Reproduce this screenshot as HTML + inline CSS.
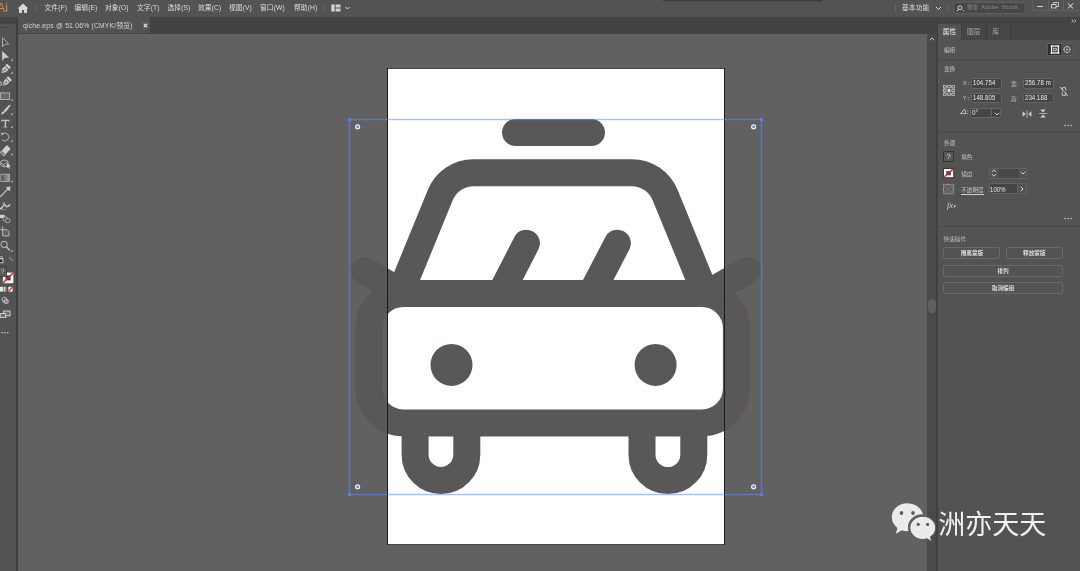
<!DOCTYPE html>
<html lang="zh-CN">
<head>
<meta charset="utf-8">
<title>qiche.eps @ 51.06% (CMYK/预览)</title>
<style>
*{box-sizing:border-box;margin:0;padding:0}
html,body{width:1080px;height:571px;overflow:hidden}
body{position:relative;background:#616161;font-family:"Liberation Sans","Noto Sans CJK SC",sans-serif;font-size:6.75px;color:#d4d4d4;line-height:1}
.a{position:absolute;white-space:nowrap}
svg{position:absolute;display:block;overflow:visible}
#menubar{left:0;top:0;width:1080px;height:17.5px;background:#535353;border-bottom:1px solid #424242}
#menubar .m{top:0;line-height:16px;color:#dedede;letter-spacing:0.08px}
#tabbar{left:17px;top:17px;width:920px;height:17px;background:#424242;border-bottom:1px solid #444444}
#doctab{left:1px;top:0;width:132px;height:16px;background:#535353;line-height:17.8px;color:#d6d6d6;padding-left:5px;letter-spacing:0.22px}
#toolbar{left:0;top:17px;width:18px;height:554px;background:#535353;border-right:2px solid #3e3e3e}
#toolhead{left:0;top:0;width:16px;height:7px;background:#454545}
#canvas{left:18px;top:34px;width:909px;height:537px;background:#616161;overflow:hidden}
#vscroll{left:927px;top:34px;width:9px;height:537px;background:#4a4a4a}
#vthumb{left:1px;top:265px;width:8px;height:14px;border-radius:4px;background:#5e5e5e}
#panel{left:936px;top:17px;width:144px;height:554px;background:#535353;border-left:2px solid #404040}
#panelhead{left:0;top:0;width:142px;height:7px;background:#434343}
#paneltabs{left:0;top:7px;width:142px;height:16px;background:#444444}
.ptab{top:0;height:16px;line-height:16px;text-align:center;background:#464646;color:#a8a8a8;border-right:1px solid #3e3e3e}
.ptab.on{background:#535353;color:#f0f0f0}
.hr{left:0;width:142px;height:1px;background:#4a4a4a}
.lbl{color:#c6c6c6;line-height:8px;font-size:5.6px}
.inp{background:#454545;border:1px solid #646464;border-radius:1.5px;color:#e8e8e8;font-family:"Liberation Sans","Noto Sans CJK SC",sans-serif;font-size:6.2px;letter-spacing:0.2px;line-height:8.4px;padding-left:0.7px;overflow:hidden}
.inp .t{display:inline-block;transform-origin:0 50%;transform:scaleX(0.86);font-size:7px;letter-spacing:0.1px}
.mono{font-family:"Liberation Mono",monospace;font-size:5.8px}
.btn{border:1px solid #696969;border-radius:2px;height:12px;line-height:10px;text-align:center;color:#f0f0f0;font-size:5.6px;font-weight:500}
.dots{color:#c8c8c8;font-size:8px;letter-spacing:0.3px;line-height:6px}
#wm{left:938.2px;top:506px;font-size:27px;line-height:38px;color:#f0f0f0;font-family:"Liberation Sans","Noto Sans CJK SC",sans-serif;font-weight:400}
</style>
</head>
<body>
<div id="app" class="a" style="left:0;top:0;width:1080px;height:571px;will-change:transform">

<!-- ===== menu bar ===== -->
<div id="menubar" class="a">
  <span class="a" style="left:-3px;top:1px;font-size:12.5px;line-height:14px;color:#d98a4c;letter-spacing:-0.2px">Ai</span>
  <svg style="left:17px;top:3px" width="12" height="11" viewBox="0 0 12 11"><path d="M6 0.5 L0.5 5.5 H2 V10 H5 V7 H7 V10 H10 V5.5 H11.5 Z" fill="#d6d6d6"/></svg>
  <div class="a" style="left:35px;top:3px;width:1px;height:10px;background:#636363"></div>
  <span class="a m" style="left:44.5px">文件(F)</span>
  <span class="a m" style="left:74.5px">编辑(E)</span>
  <span class="a m" style="left:105px">对象(O)</span>
  <span class="a m" style="left:137px">文字(T)</span>
  <span class="a m" style="left:167.5px">选择(S)</span>
  <span class="a m" style="left:198px">效果(C)</span>
  <span class="a m" style="left:229px">视图(V)</span>
  <span class="a m" style="left:260px">窗口(W)</span>
  <span class="a m" style="left:294px">帮助(H)</span>
  <div class="a" style="left:324px;top:3px;width:1px;height:10px;background:#636363"></div>
  <svg style="left:331px;top:4px" width="20" height="8" viewBox="0 0 20 8"><rect x="0.3" y="0.5" width="3.4" height="7" fill="#d4d4d4"/><rect x="4.7" y="0.5" width="4.8" height="3" fill="#d4d4d4"/><rect x="4.7" y="4.5" width="4.8" height="3" fill="#d4d4d4"/><path d="M14.5 3 L16.5 5 L18.5 3" fill="none" stroke="#dcdcdc" stroke-width="1"/></svg>

  <div class="a" style="left:663px;top:-1px;width:159px;height:2.2px;background:#3e3e3e;box-shadow:0 0 1.5px rgba(0,0,0,.45);border-radius:0 0 1px 1px"></div>
  <div class="a" style="left:895px;top:3px;width:1px;height:10px;background:#636363"></div>
  <span class="a m" style="left:902px">基本功能</span>
  <svg style="left:935px;top:6px" width="7" height="5" viewBox="0 0 7 5"><path d="M1 1 L3.5 3.5 L6 1" fill="none" stroke="#dcdcdc" stroke-width="1"/></svg>
  <div class="a" style="left:947px;top:3px;width:1px;height:10px;background:#636363"></div>
  <div class="a" style="left:953px;top:2px;width:73px;height:11.5px;background:#474747;border:1px solid #5f5f5f;border-radius:2px">
    <svg style="left:2px;top:1.5px" width="9" height="7" viewBox="0 0 9 7"><circle cx="4" cy="2.8" r="2" fill="none" stroke="#dcdcdc" stroke-width="0.9"/><path d="M2.6 4.3 L0.8 6.3" stroke="#dcdcdc" stroke-width="1"/><path d="M6.5 5.5 h2 l-1 1z" fill="#dcdcdc"/></svg>
    <span class="a" style="left:13px;top:0;line-height:9.5px;font-size:5.6px;color:#8a8a8a;font-family:'Liberation Mono','Noto Sans CJK SC',monospace">搜索 Adobe Stock</span>
  </div>
  <div class="a" style="left:1032px;top:0;width:48px;height:10.5px;border:1px solid #626262;border-top:none;border-right:none"></div>
  <div class="a" style="left:1047.5px;top:0;width:1px;height:10px;background:#626262"></div>
  <div class="a" style="left:1063px;top:0;width:1px;height:10px;background:#626262"></div>
  <div class="a" style="left:1037px;top:6.2px;width:6px;height:1.3px;background:#cfcfcf"></div>
  <svg style="left:1051px;top:2px" width="8" height="7" viewBox="0 0 8 7"><rect x="0.5" y="2.5" width="4.5" height="3.5" fill="none" stroke="#cfcfcf" stroke-width="0.9"/><path d="M2.5 2.5 V0.5 H7.5 V4.5 H5" fill="none" stroke="#cfcfcf" stroke-width="0.9"/></svg>
  <svg style="left:1067px;top:2.5px" width="7" height="6" viewBox="0 0 7 6"><path d="M1 0.5 L6 5.5 M6 0.5 L1 5.5" stroke="#d6d6d6" stroke-width="1.05"/></svg>
</div>

<!-- ===== document tab bar ===== -->
<div id="tabbar" class="a">
  <div id="doctab" class="a">qiche.eps @ 51.06% (CMYK/预览)
    <svg style="left:125px;top:6px" width="5" height="5" viewBox="0 0 5 5"><path d="M0.7 0.7 L4.3 4.3 M4.3 0.7 L0.7 4.3" stroke="#f0f0f0" stroke-width="1.1"/></svg>
  </div>
</div>

<!-- ===== canvas ===== -->
<div id="canvas" class="a">
<svg style="left:0;top:0" width="909" height="537" viewBox="18 34 909 537">
  <rect x="387.5" y="68.5" width="337" height="476" fill="#ffffff"/>
  <g fill="none" stroke="#595757" stroke-width="27" stroke-linecap="round" stroke-linejoin="round">
    <rect x="502" y="119" width="103" height="27" rx="13.5" fill="#595757" stroke="none"/>
    <path d="M400,293.5 L440.3,195 A36,36 0 0 1 473.5,172.7 L631.9,172.7 A36,36 0 0 1 665.1,195 L705.4,293.5"/>
    <rect x="368.9" y="293.5" width="367.5" height="129.4" rx="34.5"/>
    <path d="M526.4,243.2 L500.6,293.5 M617.4,243.2 L591.2,293.5"/>
    <path d="M364.5,270.7 L395,288.3 M747.5,270.3 L715,289"/>
    <path d="M415.1,425 V454.65 A25.85,25.85 0 0 0 466.8,454.65 V425" stroke-linecap="butt"/>
    <path d="M642,425 V454.65 A25.9,25.9 0 0 0 693.8,454.65 V425" stroke-linecap="butt"/>
    <circle cx="451.5" cy="364.9" r="21" fill="#595757" stroke="none"/>
    <circle cx="655.6" cy="364.9" r="21" fill="#595757" stroke="none"/>
  </g>
  <path d="M387.5 68 V545 M724.5 68 V545" stroke="#1c1c1c" stroke-width="1" fill="none"/><path d="M387 68.5 H725 M387 544.5 H725" stroke="#1c1c1c" stroke-opacity="0.7" stroke-width="1" fill="none"/>
  <!-- selection -->
  <rect x="349.5" y="119.5" width="412" height="375" fill="none" stroke="#5b8cff" stroke-opacity="0.55" stroke-width="1.4"/>
  <g fill="#4f80ff">
    <rect x="348" y="118" width="3" height="3"/><rect x="760" y="118" width="3" height="3"/>
    <rect x="348" y="493" width="3" height="3"/><rect x="760" y="493" width="3" height="3"/>
  </g>
  <g fill="#4f80ff" stroke="#e8eeff" stroke-width="1.2">
    <circle cx="357.6" cy="126.8" r="2"/><circle cx="753.6" cy="126.8" r="2"/>
    <circle cx="357.6" cy="486.8" r="2"/><circle cx="753.6" cy="486.8" r="2"/>
  </g>
</svg>
</div>
<div id="vscroll" class="a"><div id="vthumb" class="a"></div>
  <svg style="left:2px;top:3px" width="6" height="4" viewBox="0 0 6 4"><path d="M0.8 3.2 L3 1 L5.2 3.2" fill="none" stroke="#cfcfcf" stroke-width="0.9"/></svg>
</div>

<!-- ===== toolbar ===== -->
<div id="toolbar" class="a">
  <div id="toolhead" class="a"></div>
  <div class="a" style="left:0;top:9.5px;width:10px;height:1.5px;background:#474747"></div>
  <div class="a" style="left:0;top:0;width:16px;height:554px;overflow:hidden"><svg style="left:0;top:0" width="16" height="554" viewBox="0 17 16 554"><path d="M2.5 37.6 V46.8 L4.7 44.5 L8.8 43.8 Z" fill="none" stroke="#b4b4b4" stroke-width="0.9" stroke-linejoin="miter"/>
<path d="M2.1 50.9 V60.7 L4.7 58 L9.1 57.4 Z" fill="#c8c8c8"/><path d="M12.6 60.7 v-2 l-2 2z" fill="#cfcfcf"/>
<g transform="translate(5.5,69) rotate(45)"><path d="M-2.5 -1.8 L-2.5 1.6 L0 5.9 L2.5 1.6 L2.5 -1.8 Z" fill="#c4c4c4"/><rect x="-2.7" y="-4.8" width="5.4" height="2.2" fill="#d8d8d8"/><path d="M0 5 V1" stroke="#555" stroke-width="0.7"/><circle cx="0" cy="0.6" r="0.7" fill="#555"/></g><path d="M12.6 73.7 v-2 l-2 2z" fill="#cfcfcf"/>
<g transform="translate(6.6,81.6) rotate(45)"><path d="M-2.5 -1.8 L-2.5 1.6 L0 5.9 L2.5 1.6 L2.5 -1.8 Z" fill="#c4c4c4"/><rect x="-2.7" y="-4.8" width="5.4" height="2.2" fill="#d8d8d8"/><path d="M0 5 V1" stroke="#555" stroke-width="0.7"/><circle cx="0" cy="0.6" r="0.7" fill="#555"/></g><path d="M-0.4 82 q2.2 -0.6 1.8 1.8 q-0.4 2 -2 2.4" fill="none" stroke="#cfcfcf" stroke-width="0.9"/>
<rect x="0.6" y="92.9" width="9" height="6.6" fill="#6a6a6a" stroke="#b4b4b4" stroke-width="0.9"/><path d="M12.6 100.7 v-2 l-2 2z" fill="#cfcfcf"/>
<path d="M9.6 104.6 L10.6 105.6 L5.6 112.2 L3.8 110.6 Z" fill="#cfcfcf"/><path d="M3.5 110.9 q-1.9 0.5 -2.5 3.5 q3.1 -0.2 4 -2.3 z" fill="#cfcfcf"/><path d="M12.6 114.7 v-2 l-2 2z" fill="#cfcfcf"/>
<path d="M1.4 119.8 H9.4 V122 H8.7 V121 H6.1 V126.7 H7.2 V127.5 H3.6 V126.7 H4.7 V121 H2.1 V122 H1.4 Z" fill="#c4c4c4"/><path d="M12.6 128.0 v-2 l-2 2z" fill="#cfcfcf"/>
<path d="M2.2 134 A4 4 0 1 1 2 139.8" fill="none" stroke="#bcbcbc" stroke-width="0.95"/><path d="M0.6 132.8 L4 133 L2 135.8 Z" fill="#bcbcbc"/><path d="M12.6 141.7 v-2 l-2 2z" fill="#cfcfcf"/>
<g transform="translate(5.4,150.6) rotate(-48)"><rect x="-5" y="-2.7" width="10" height="5.4" rx="0.8" fill="#d0d0d0"/><rect x="-5" y="-2.7" width="2.6" height="5.4" rx="0.8" fill="#7c7c7c" stroke="#d0d0d0" stroke-width="0.6"/></g><path d="M12.6 155.2 v-2 l-2 2z" fill="#cfcfcf"/>
<ellipse cx="4.4" cy="163.4" rx="4" ry="3.4" fill="none" stroke="#bdbdbd" stroke-width="0.9"/><path d="M0.6 163 L4 164.8 L7.6 161.6 M4 164.8 V166.8" fill="none" stroke="#bdbdbd" stroke-width="0.8"/><path d="M6.8 162.8 v5.4 l1.3 -1.3 l1 1.9 l0.9 -0.5 l-1 -1.8 l1.8 -0.2z" fill="#d4d4d4"/>
<defs><linearGradient id="tg" x1="0" x2="1" y1="0" y2="0"><stop offset="0" stop-color="#4e4e4e"/><stop offset="1" stop-color="#a4a4a4"/></linearGradient></defs><rect x="0.8" y="174.2" width="8.8" height="7.4" fill="url(#tg)" stroke="#b0b0b0" stroke-width="0.8"/><path d="M12.6 182.2 v-2 l-2 2z" fill="#cfcfcf"/>
<path d="M7.4 189.4 L1.6 195.4 L0.6 196.6" stroke="#c4c4c4" stroke-width="1.3" stroke-linecap="round" fill="none"/><path d="M7 187.6 L9.6 190.2" stroke="#d0d0d0" stroke-width="1.5" stroke-linecap="round"/><path d="M8.2 188.8 L9.4 187.6" stroke="#d0d0d0" stroke-width="2.2" stroke-linecap="round"/>
<path d="M-0.5 208.4 q2.4 0.4 3.6 -2.2 q1.2 -2.6 2.6 -0.4 q1.4 2.2 4.4 -1.6" fill="none" stroke="#c8c8c8" stroke-width="1.5"/><path d="M2.4 203.4 q1.6 -1.6 2.8 0.2" fill="none" stroke="#c8c8c8" stroke-width="0.9"/><path d="M-0.5 209.6 H6" stroke="#9a9a9a" stroke-width="0.7"/>
<rect x="0" y="214.8" width="4.6" height="3.2" fill="#d0d0d0"/><rect x="3" y="217" width="4.2" height="4" rx="1" fill="#535353" stroke="#bdbdbd" stroke-width="0.8"/><rect x="5.6" y="218.6" width="4.2" height="4" rx="1.2" fill="#535353" stroke="#bdbdbd" stroke-width="0.8"/>
<path d="M2.7 229.7 H7 L8.9 231.6 V235.9 H2.7 Z" fill="#626262" stroke="#c4c4c4" stroke-width="0.9"/><path d="M2.7 226.4 V229.7 M0 229.7 H2.7" stroke="#c4c4c4" stroke-width="0.9"/>
<circle cx="4.1" cy="244.4" r="3.2" fill="none" stroke="#c0c0c0" stroke-width="1"/><path d="M6.6 247 L9.4 250" stroke="#c0c0c0" stroke-width="1.4" stroke-linecap="round"/><path d="M12.6 251.7 v-2 l-2 2z" fill="#cfcfcf"/>
<rect x="-1.5" y="258.6" width="4.4" height="4.2" fill="#2c2c2c" stroke="#cfcfcf" stroke-width="0.9"/><rect x="-0.4" y="256.8" width="2.6" height="2.2" fill="none" stroke="#cfcfcf" stroke-width="0.7"/><path d="M9.4 258 q3 0 3 3 M9.4 258 l1.4 -1.2 M9.4 258 l1.4 1.2 M12.4 261 l-1.2 -1.3 M12.4 261 l1.2 -1.3" fill="none" stroke="#8e8e8e" stroke-width="0.8"/>
<rect x="2.9" y="272.6" width="10.4" height="10.6" fill="#ffffff"/><rect x="5.6" y="275.4" width="5" height="5" fill="#3a3a3a"/><path d="M3.2 282.8 L13 273" stroke="#e8202a" stroke-width="1.5"/><rect x="-2" y="266.4" width="8.6" height="10" fill="#595959" stroke="#3e3e3e" stroke-width="0.8"/><text x="0.4" y="274.3" font-size="7" fill="#b8c4d8" font-family="Liberation Sans, sans-serif">?</text>
<rect x="-0.4" y="286.8" width="3.6" height="4.8" fill="#e6e6e6"/><defs><linearGradient id="tg2" x1="0" x2="1"><stop offset="0" stop-color="#f0f0f0"/><stop offset="1" stop-color="#444"/></linearGradient></defs><rect x="3.8" y="286.8" width="3.8" height="4.8" fill="url(#tg2)"/><rect x="8.4" y="286.8" width="4.2" height="4.8" fill="#ffffff"/><path d="M8.6 291.4 L12.4 287" stroke="#e8202a" stroke-width="1.2"/>
<circle cx="4.4" cy="299.6" r="2.3" fill="none" stroke="#cfcfcf" stroke-width="0.9"/><rect x="4" y="299.8" width="4.2" height="3.4" rx="0.6" fill="#8a8a8a" stroke="#cfcfcf" stroke-width="0.8"/>
<rect x="3.6" y="311" width="6.4" height="4.8" fill="#6a6a6a" stroke="#cfcfcf" stroke-width="1"/><rect x="0.2" y="313.6" width="5.6" height="3.8" fill="#6a6a6a" stroke="#cfcfcf" stroke-width="1"/>
<circle cx="2.2" cy="332.7" r="0.8" fill="#cfcfcf"/><circle cx="5" cy="332.7" r="0.8" fill="#cfcfcf"/><circle cx="7.8" cy="332.7" r="0.8" fill="#cfcfcf"/></svg></div>
</div>

<!-- ===== right panel ===== -->
<div id="panel" class="a">
  <div id="panelhead" class="a"></div>
  <div id="paneltabs" class="a">
    <div class="a ptab on" style="left:0;width:24px">属性</div>
    <div class="a ptab" style="left:24px;width:24.5px">图层</div>
    <div class="a ptab" style="left:48.5px;width:24px;text-align:left;padding-left:5.8px">库</div>
  </div>
  <svg style="left:133px;top:1.5px" width="6" height="4" viewBox="0 0 6 4"><path d="M0.6 0.5 L2.4 2 L0.6 3.5 M3.2 0.5 L5 2 L3.2 3.5" fill="none" stroke="#d0d0d0" stroke-width="0.8"/></svg>

  <span class="a lbl" style="left:6px;top:29px">编组</span>
  <div class="a" style="left:109px;top:26px;width:27px;height:13px;border:1px solid #5e5e5e;border-radius:2px;background:#4e4e4e">
    <div class="a" style="left:0;top:0;width:12.5px;height:11px;background:#2d2d2d"></div>
    <svg style="left:1.5px;top:1px" width="10" height="9" viewBox="0 0 10 9"><rect x="1.6" y="1" width="6.8" height="7" fill="none" stroke="#f4f4f4" stroke-width="1.3"/><rect x="3.8" y="3.2" width="2.4" height="2.6" fill="none" stroke="#f4f4f4" stroke-width="0.8"/><path d="M0.5 0.4h2v1.2h-2zM7.5 0.4h2v1.2h-2zM0.5 7.4h2v1.2h-2zM7.5 7.4h2v1.2h-2z" fill="#f4f4f4"/></svg>
    <svg style="left:14px;top:1px" width="10" height="9" viewBox="0 0 10 9"><circle cx="5" cy="4.5" r="3" fill="none" stroke="#cfcfcf" stroke-width="0.8"/><circle cx="5" cy="4.5" r="0.9" fill="#cfcfcf"/><path d="M5 0.6v1.4M5 7v1.4M1.1 4.5h1.4M7.5 4.5h1.4" stroke="#cfcfcf" stroke-width="0.7"/></svg>
  </div>
  <div class="a hr" style="top:42px"></div>
  <span class="a lbl" style="left:6px;top:48px">变换</span>
  <svg style="left:5px;top:68px" width="12" height="11" viewBox="0 0 12 11"><g fill="none" stroke="#cdcdcd" stroke-width="0.7"><rect x="0.5" y="0.5" width="2.6" height="2.4"/><rect x="4.7" y="0.5" width="2.6" height="2.4"/><rect x="8.9" y="0.5" width="2.6" height="2.4"/><rect x="0.5" y="4.3" width="2.6" height="2.4"/><rect x="8.9" y="4.3" width="2.6" height="2.4"/><rect x="0.5" y="8.1" width="2.6" height="2.4"/><rect x="4.7" y="8.1" width="2.6" height="2.4"/><rect x="8.9" y="8.1" width="2.6" height="2.4"/><path d="M3.1 1.7h1.6M7.3 1.7h1.6M3.1 9.3h1.6M7.3 9.3h1.6M1.8 2.9v1.4M1.8 6.7v1.4M10.2 2.9v1.4M10.2 6.7v1.4"/></g><rect x="4.7" y="4.3" width="2.6" height="2.4" fill="#ffffff"/></svg>
  <span class="a lbl mono" style="left:25px;top:63px">X:</span>
  <div class="a inp" style="left:33px;top:61px;width:30.5px;height:10.5px"><span class="t">104.754</span></div>
  <span class="a lbl mono" style="left:25px;top:77.5px">Y:</span>
  <div class="a inp" style="left:33px;top:75.7px;width:30.5px;height:10.5px"><span class="t">148.805</span></div>
  <span class="a lbl" style="left:73px;top:63px">宽:</span>
  <div class="a inp" style="left:85px;top:61px;width:30.5px;height:10.5px"><span class="t">256.78 m</span></div>
  <span class="a lbl" style="left:73px;top:77.5px">高:</span>
  <div class="a inp" style="left:85px;top:75.7px;width:30.5px;height:10.5px"><span class="t">234.188</span></div>
  <svg style="left:121px;top:69px" width="10" height="11" viewBox="0 0 10 11"><g fill="none" stroke="#cdcdcd" stroke-width="1"><path d="M3.2 4.6 V3 a1.8 1.8 0 0 1 3.6 0 V4.4"/><path d="M3.2 6.4 V8 a1.8 1.8 0 0 0 3.6 0 V6.6"/><path d="M1.2 1 L8.8 10"/></g></svg>
  <svg style="left:22px;top:91px" width="9" height="7" viewBox="0 0 9 7"><path d="M0.6 5.6 H6 L4.6 1.2 Z" fill="none" stroke="#cdcdcd" stroke-width="0.9" stroke-linejoin="miter"/><path d="M7.6 2.6v0.8M7.6 5v0.8" stroke="#cdcdcd" stroke-width="0.9"/></svg>
  <div class="a inp" style="left:32px;top:90.8px;width:31px;height:10.2px;font-size:6.8px;letter-spacing:0">0°
    <div class="a" style="left:19.5px;top:0;width:1px;height:9px;background:#646464"></div>
    <svg style="left:22.5px;top:3px" width="6" height="4" viewBox="0 0 6 4"><path d="M0.8 0.8 L3 3 L5.2 0.8" fill="none" stroke="#e0e0e0" stroke-width="0.9"/></svg>
  </div>
  <svg style="left:84px;top:92.5px" width="10" height="8" viewBox="0 0 10 8"><path d="M5 0v8" stroke="#cdcdcd" stroke-width="0.7"/><path d="M0.6 1.2 L3.8 4 L0.6 6.8Z M9.4 1.2 L6.2 4 L9.4 6.8Z" fill="#cdcdcd"/></svg>
  <svg style="left:101px;top:92px" width="8" height="9" viewBox="0 0 8 9"><path d="M0 4.5h8" stroke="#cdcdcd" stroke-width="0.7"/><path d="M1.2 0.4 L4 3.4 L6.8 0.4Z M1.2 8.6 L4 5.6 L6.8 8.6Z" fill="#cdcdcd"/></svg>
  <svg style="left:126px;top:106.5px" width="9" height="3" viewBox="0 0 9 3"><circle cx="1.2" cy="1.5" r="0.8" fill="#cdcdcd"/><circle cx="4.2" cy="1.5" r="0.8" fill="#cdcdcd"/><circle cx="7.2" cy="1.5" r="0.8" fill="#cdcdcd"/></svg>
  <div class="a hr" style="top:115px"></div>

  <span class="a lbl" style="left:6px;top:121.5px">外观</span>
  <div class="a" style="left:5.2px;top:134.2px;width:11px;height:10.6px;border:1px solid #333333;background:#595959;text-align:center;line-height:10px;font-size:7.6px;color:#e2e2e2">?</div>
  <span class="a lbl" style="left:23.2px;top:136.2px">填色</span>
  <svg style="left:5.4px;top:150.9px" width="11.2" height="10.2" viewBox="0 0 10 9" preserveAspectRatio="none"><rect x="0.4" y="0.4" width="9.2" height="8.2" fill="#ffffff" stroke="#2f2f2f" stroke-width="0.8"/><rect x="3" y="2.8" width="4" height="3.6" fill="#3a3a3a"/><path d="M0.8 8.2 L9.2 0.8" stroke="#e8202a" stroke-width="1.3"/></svg>
  <span class="a lbl" style="left:23.2px;top:152.5px">描边</span>
  <div class="a" style="left:50.6px;top:150.5px;width:38.8px;height:11px;border:1px solid #626262;border-radius:1.5px">
    <svg style="left:1.8px;top:0.8px" width="6" height="8" viewBox="0 0 6 8"><path d="M0.9 2.8 L3 0.8 L5.1 2.8 M0.9 5.2 L3 7.2 L5.1 5.2" fill="none" stroke="#e0e0e0" stroke-width="0.9"/></svg>
    <div class="a" style="left:9.5px;top:0;width:19px;height:9px;background:#484848;border-left:1px solid #444;border-right:1px solid #444"></div>
    <svg style="left:30.6px;top:2.8px" width="6" height="4" viewBox="0 0 6 4"><path d="M0.8 0.8 L3 3 L5.2 0.8" fill="none" stroke="#e0e0e0" stroke-width="0.9"/></svg>
  </div>
  <svg style="left:5.4px;top:167.3px" width="11" height="10.2" viewBox="0 0 10 9" preserveAspectRatio="none"><rect x="0.4" y="0.4" width="9.2" height="8.2" fill="#5e5e5e" stroke="#9a9a9a" stroke-width="0.9"/><path d="M0.4 0.4h3v2.8h-3zM6.4 0.4h3.2v2.8h-3.2zM3.4 3.2h3v2.8h-3zM0.4 6h3v2.6h-3zM6.4 6h3.2v2.6h-3.2z" fill="#6c6c6c"/></svg>
  <span class="a lbl" style="left:23.2px;top:169px;border-bottom:0.8px solid #cfcfcf;line-height:8.2px;height:9px">不透明度</span>
  <div class="a inp" style="left:50.6px;top:166.3px;width:29px;height:11.2px;line-height:11px"><span class="t">100%</span></div>
  <div class="a" style="left:79.6px;top:166.3px;width:9.8px;height:11.2px;border:1px solid #626262;border-left:none;border-radius:0 1.5px 1.5px 0">
    <svg style="left:2.8px;top:2px" width="4" height="6" viewBox="0 0 4 6"><path d="M0.8 0.8 L3 3 L0.8 5.2" fill="none" stroke="#e0e0e0" stroke-width="0.9"/></svg>
  </div>
  <span class="a" style="left:9px;top:184px;font-family:'Liberation Serif',serif;font-style:italic;font-size:8.5px;line-height:9px;color:#d0d0d0">fx<span style="font-size:5px">&#9662;</span></span>
  <svg style="left:126px;top:200.4px" width="9" height="3" viewBox="0 0 9 3"><circle cx="1.2" cy="1.5" r="0.8" fill="#cdcdcd"/><circle cx="4.2" cy="1.5" r="0.8" fill="#cdcdcd"/><circle cx="7.2" cy="1.5" r="0.8" fill="#cdcdcd"/></svg>
  <div class="a hr" style="top:209.4px"></div>

  <span class="a lbl" style="left:5.6px;top:217.9px;color:#bdbdbd">快速操作</span>
  <div class="a btn" style="left:5.4px;top:230.3px;width:57px">隔离蒙版</div>
  <div class="a btn" style="left:67.8px;top:230.3px;width:57px">释放蒙版</div>
  <div class="a btn" style="left:5.4px;top:248px;width:119.4px">排列</div>
  <div class="a btn" style="left:5.4px;top:264.9px;width:119.4px">取消编组</div>
</div>

<svg style="left:890.6px;top:502px" width="46" height="43.4" viewBox="0 0 44 38" preserveAspectRatio="none">
  <path d="M15.2 1.2 C7.2 1.2 0.8 6.6 0.8 13.4 c0 3.8 2 7.2 5.4 9.4 l-1.6 5 l5.8 -3 c1.6 0.5 3.2 0.8 4.8 0.8 c0.5 0 1 0 1.5 -0.1 c-0.3 -1 -0.5 -2 -0.5 -3.1 c0 -6.4 6 -11.6 13.4 -11.6 c0.3 0 0.6 0 0.9 0 C29.2 5.2 22.8 1.2 15.2 1.2 Z" fill="#ebebeb"/>
  <path d="M42.8 22.6 c0 -5.6 -5.6 -10.2 -12.4 -10.2 s-12.4 4.6 -12.4 10.2 s5.600 10.200 12.400 10.200 c1.400 0 2.800 -0.200 4.000 -0.600 l4.600 2.600 l-1.200 -4.200 c3.000 -1.800 5.000 -4.800 5.000 -8.000 Z" fill="#ebebeb" stroke="#585858" stroke-width="0.9"/>
  <circle cx="10" cy="9.6" r="1.7" fill="#5a5a5a"/><circle cx="21" cy="9.6" r="1.7" fill="#5a5a5a"/>
  <circle cx="26" cy="19.6" r="1.5" fill="#5a5a5a"/><circle cx="35" cy="19.6" r="1.5" fill="#5a5a5a"/>
</svg>
<div id="wm" class="a">洲亦天天</div>
</div>
</body>
</html>
